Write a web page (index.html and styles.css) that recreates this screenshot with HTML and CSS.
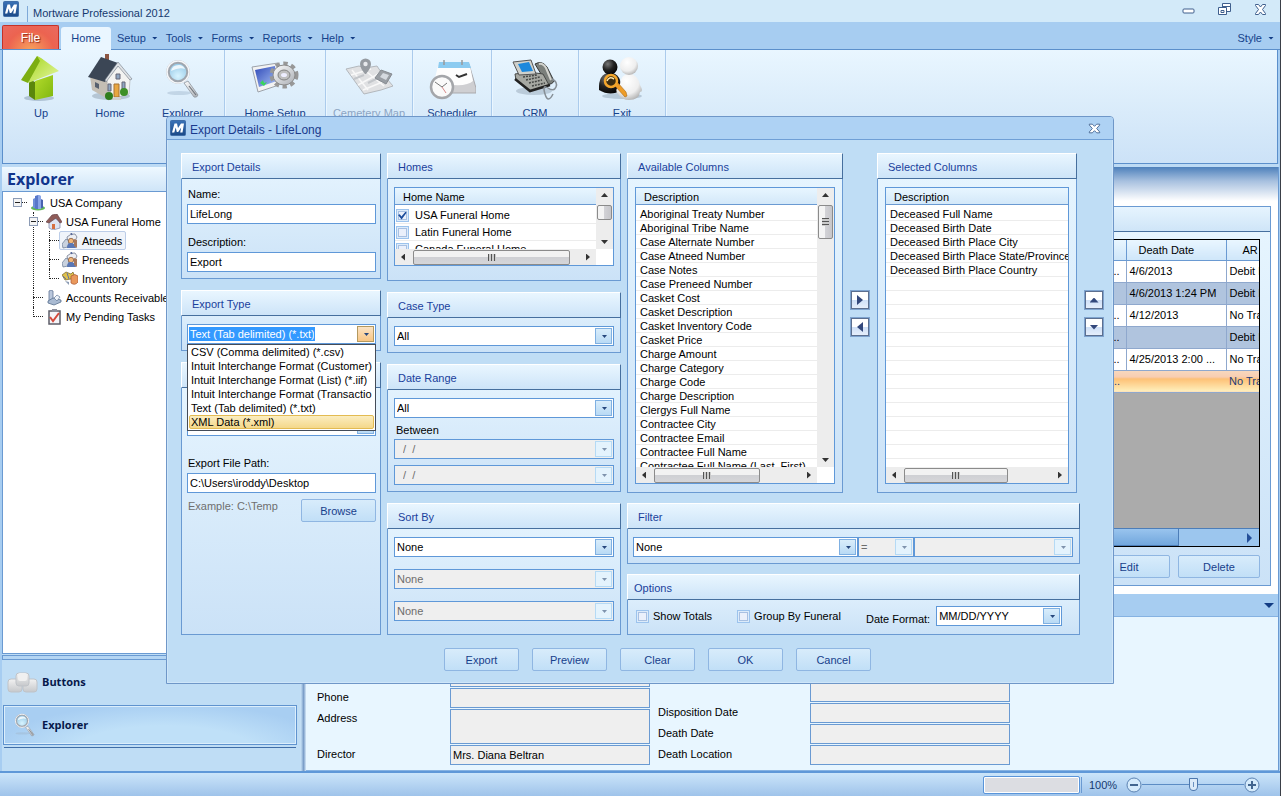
FILE: index.html
```html
<!DOCTYPE html>
<html lang="en">
<head>
<meta charset="utf-8">
<title>Mortware Professional 2012</title>
<link rel="stylesheet" href="styles.css">
</head>
<body>
<svg class="defs" aria-hidden="true">
  <defs>
    <linearGradient id="gBlue" x1="0" y1="0" x2="0" y2="1"><stop offset="0" stop-color="#3a72b6"/><stop offset="1" stop-color="#1b4a88"/></linearGradient>
    <linearGradient id="gGreen" x1="0" y1="0" x2="1" y2="1"><stop offset="0" stop-color="#b4dc2c"/><stop offset="1" stop-color="#7fb60f"/></linearGradient>
    <linearGradient id="gLime" x1="0" y1="0" x2="1" y2="1"><stop offset="0" stop-color="#a5d61f"/><stop offset="1" stop-color="#e6f7a4"/></linearGradient>
    <linearGradient id="gSilver" x1="0" y1="0" x2="1" y2="1"><stop offset="0" stop-color="#ffffff"/><stop offset="1" stop-color="#a9adb3"/></linearGradient>
    <linearGradient id="gCube" x1="0" y1="0" x2="0" y2="1"><stop offset="0" stop-color="#f2f2f2"/><stop offset="1" stop-color="#c6c8cb"/></linearGradient>
    <linearGradient id="gScreen" x1="0" y1="0" x2="1" y2="1"><stop offset="0" stop-color="#2f49b8"/><stop offset="1" stop-color="#a9c3f5"/></linearGradient>
    <radialGradient id="gBlack" cx=".35" cy=".3" r=".8"><stop offset="0" stop-color="#777"/><stop offset=".5" stop-color="#222"/><stop offset="1" stop-color="#000"/></radialGradient>
    <radialGradient id="gWhite" cx=".4" cy=".3" r=".8"><stop offset="0" stop-color="#fff"/><stop offset=".6" stop-color="#eeeeee"/><stop offset="1" stop-color="#a2a2a2"/></radialGradient>
    <radialGradient id="gLens" cx=".5" cy=".7" r=".7"><stop offset="0" stop-color="#d8f4ff"/><stop offset="1" stop-color="#8fc4e4"/></radialGradient>
  </defs>
  <symbol id="logo" viewBox="0 0 16 16">
    <rect x=".5" y=".5" width="15" height="15" rx="1" fill="url(#gBlue)" stroke="#3f6ea8"/>
    <path d="M2 12.500 4.500 3.500H7L8 8l3-4.500h3L12.500 12.500h-2.300L11.200 7.500 8.200 12H6.800L5.700 7.500 4.300 12.500z" fill="#fff"/>
  </symbol>
  <symbol id="lens" viewBox="0 0 36 40">
    <ellipse cx="14" cy="34" rx="12" ry="2" fill="#9fb6cc" opacity=".45"/>
    <path d="M19 24l4-2 10 14q-1 3-4 2z" fill="url(#gSilver)" stroke="#8e949c" stroke-width=".8"/>
    <path d="M24 27l7 9" stroke="#70757c" stroke-width="1.200"/>
    <circle cx="13" cy="13" r="10" fill="url(#gLens)" stroke="#a0a6ae" stroke-width="3.500"/>
    <circle cx="13" cy="13" r="11" fill="none" stroke="#f6f7f9" stroke-width="1.500"/>
    <path d="M6 12q1-6 8-6 4 0 6 4-6-2-14 2z" fill="#fff" opacity=".8"/>
  </symbol>
  <symbol id="people" viewBox="0 0 16 16">
    <path d="M5 4q4-4 8-3l2 3-2 4-7 1z" fill="#eceef3" stroke="#737c90" stroke-width=".8"/>
    <path d="M9 0l1 2" stroke="#53669a" stroke-width="1.500"/>
    <path d="M0 11l4-5 3 2-1 6-5 1z" fill="#c9d2df" stroke="#667892" stroke-width=".7"/>
    <circle cx="9" cy="8" r="2.700" fill="#f0b679" stroke="#7d533a" stroke-width=".7"/>
    <path d="M5 15q0-5 4-5t5 5z" fill="#5a77b5"/>
    <path d="M12 6l3 1v8l-3-2z" fill="#a8785c"/>
  </symbol>
</svg>

<div class="window">
  <header class="titlebar">
    <svg class="logo"><use href="#logo"/></svg>
    <span class="divider"></span>
    <h1>Mortware Professional 2012</h1>
    <div class="winctl">
      <button aria-label="Minimize"><svg width="15" height="15" viewBox="0 0 15 15"><rect x="2" y="7" width="11" height="4" rx="1" fill="#fff" stroke="#3f5f8d"/></svg></button>
      <button aria-label="Restore"><svg width="15" height="15" viewBox="0 0 15 15"><path d="M5.500 1.500h8v8h-8z M6 4.500h7" fill="#fff" stroke="#3f5f8d"/><path d="M1.500 5.500h8v7h-8z M4 8.500h3v2h-3z" fill="#fff" stroke="#3f5f8d"/></svg></button>
      <button aria-label="Close"><svg width="15" height="15" viewBox="0 0 15 15"><path d="M2.500 2.500h3L7.500 5l2-2.500h3v1L9.500 7.500l3 4v1h-3L7.500 10l-2 2.500h-3v-1l3-4-3-4z" fill="#fff" stroke="#3f5f8d"/></svg></button>
    </div>
  </header>

  <nav class="menu">
    <button class="file">File</button>
    <button class="tab">Home</button>
    <button class="item">Setup</button>
    <button class="item">Tools</button>
    <button class="item">Forms</button>
    <button class="item">Reports</button>
    <button class="item">Help</button>
    <button class="item style">Style</button>
  </nav>

  <section class="ribbon">
    <div class="rgroup first">
      <button class="up"><svg width="48" height="48" viewBox="0 0 48 48"><ellipse cx="22" cy="44" rx="15" ry="3" fill="#8297ad" opacity=".5"/><path d="M12 25l6 3v18l-6-4z" fill="#5b870c"/><path d="M18 27l18-6v21l-18 4z" fill="url(#gGreen)"/><path d="M20 2 4 26l7 3L26 6z" fill="#7cae12"/><path d="M20 2 24 4 42 17l-31 12L23 7z" fill="url(#gLime)"/></svg>Up</button>
      <button class="home"><svg width="48" height="48" viewBox="0 0 48 48"><ellipse cx="25" cy="42" rx="19" ry="4" fill="#8e9eae" opacity=".5"/><path d="M19 0h4v9h-4z" fill="#8b5542"/><path d="M4 22l2 14 16 9V24z" fill="#c4beb4"/><path d="M21 25 33 11l11 15-1 14-21 6z" fill="#f3f3f1" stroke="#aaa" stroke-width=".6"/><path d="M2 23 15 3l17 6-13 19z" fill="#3b4655"/><path d="M32 8l14 17-2 1-12-14-12 16-1-2z" fill="#dfe2e5" stroke="#717b86" stroke-width=".6"/><path d="M28 30h5v13h-5z" fill="#e8a640" stroke="#a77331"/><path d="M22 30h3v7h-3zM36 28h3v7h-3zM30 20h4v5h-4z" fill="#8fa6c1" stroke="#667"/><circle cx="23" cy="42" r="4" fill="#2f7d1d"/><circle cx="38" cy="38" r="4" fill="#3e9027"/><path d="M28 43h7v3h-9z" fill="#d0d0d0"/><path d="M9 28l4 2v5l-4-2z" fill="#56606e"/></svg>Home</button>
      <button class="expl"><svg width="48" height="48" viewBox="-6 -5 48 48"><use href="#lens" width="36" height="40"/></svg>Explorer</button>
    </div>
    <div class="rgroup wide">
      <button><svg width="48" height="48" viewBox="0 0 48 48"><path d="M1 13l26-4 1 22-21 7z" fill="#f3f3f3" stroke="#9ca2aa"/><path d="M4 16l20-4 2 15-18 6z" fill="url(#gScreen)"/><path d="M9 29l3-3 1 3 3-1-3 4z" fill="#38d55b"/><g transform="translate(33 21)"><ellipse rx="12" ry="11" fill="none" stroke="#989898" stroke-width="5" stroke-dasharray="4.200 3.400"/><ellipse rx="11" ry="10" fill="url(#gSilver)" stroke="#8b8b8b"/><ellipse rx="6" ry="5" fill="#bfbfbf" stroke="#828282"/><ellipse rx="3" ry="2" fill="#eef"/></g></svg>Home Setup</button>
    </div>
    <div class="rgroup">
      <button disabled><svg width="48" height="48" viewBox="0 0 48 48"><path d="M1 15l13-3 6 2 12-2 4 6 12 14-12 4-17 4z" fill="#e0e1e3" stroke="#b3b8bd"/><path d="M7 16l16 20M17 14l22 18M6 21l20-6M13 31l22-12M18 36l22-9" stroke="#f8f8f8" stroke-width="1.500" fill="none"/><path d="M9 25l10-4M23 29l10-5" stroke="#c3c6ca" stroke-width="2"/><path d="M20 20q-5-6-5-10a5 5 0 0 1 11 0q0 4-5 10z" fill="#969ba1"/><circle cx="20.500" cy="10" r="2.200" fill="#e7e9ec"/><path d="M30 24l6-8 11 4-6 10z" fill="#999ea4" stroke="#868b91"/><path d="M35 23l3-4 6 2-3 5z" fill="#d4d9df"/></svg>Cemetery Map</button>
    </div>
    <div class="rgroup narrow">
      <button><svg width="48" height="48" viewBox="0 0 48 48"><path d="M6 36l6-26h29l7 24v5H8z" fill="#cfcfd2" stroke="#a9a9ad"/><path d="M10 12h32l3 15q-5 5-20 4L6 28z" fill="#fdfdfd"/><path d="M11 8h30l2 6H10z" fill="#8ccbf0"/><path d="M16 11V6M34 11V6" stroke="#999" stroke-width="1.500"/><path d="M28 21l3 2 8-3" fill="none" stroke="#333" stroke-width="2"/><circle cx="14" cy="33" r="11" fill="#fafafa" stroke="#a4a6aa" stroke-width="2.500"/><path d="M7 28l7 5 5-4" fill="none" stroke="#777"/><path d="M14 33l4 6" stroke="#d78989"/></svg>Scheduler</button>
    </div>
    <div class="rgroup">
      <button><svg width="48" height="48" viewBox="0 0 48 48"><ellipse cx="23" cy="37" rx="18" ry="4" fill="#8496a8" opacity=".4"/><path d="M24 10q7-4 12 3l7 14q-2 4-7 3L27 15z" fill="#7b7f7b" stroke="#363838"/><path d="M28 10q4-1 7 4l5 12" fill="none" stroke="#d2d3ce" stroke-width="2"/><path d="M4 20l14-2 14 2 6 11-19 6L5 26z" fill="#a6a8a2" stroke="#464846"/><path d="M4 25l15 12 20-6" fill="none" stroke="#222" stroke-width="2.500"/><path d="M2 8l18-2 5 14-17 1z" fill="#d0d1cc" stroke="#555"/><path d="M7 10l11-2 4 9-11 1z" fill="#1d88dc"/><path d="M12 23l14-2M15 26l14-3M18 29l13-3M21 32l13-3" stroke="#454745" stroke-width="1.500" stroke-dasharray="2 1"/><path d="M41 25q6 3 4 8t-8 1-3 6 8 0" fill="none" stroke="#878f96" stroke-width="1.500"/></svg>CRM</button>
    </div>
    <div class="rgroup">
      <button><svg width="48" height="48" viewBox="0 0 48 48"><ellipse cx="24" cy="42" rx="20" ry="3" fill="#8fa3b6" opacity=".5"/><path d="M1 36q-1-16 11-18 12 2 11 18-10 7-22 0z" fill="url(#gBlack)"/><circle cx="12" cy="13" r="7.500" fill="url(#gBlack)"/><path d="M20 40q-4-4 2-10 1-9 9-11 9 2 11 12 4 7 0 7-1 8-11 8-7 0-11-6z" fill="url(#gWhite)"/><circle cx="31" cy="12" r="9" fill="url(#gWhite)"/><path d="M17 32l10 11 2-1-1-4-8-9z" fill="#ee9c27" stroke="#a96812" stroke-width=".6"/><circle cx="13" cy="27" r="6" fill="#3a2c12" stroke="#f3a62c" stroke-width="2.500"/><path d="M9 27q2-5 7-2" stroke="#ffe7a8" stroke-width="1.500" fill="none"/></svg>Exit</button>
    </div>
  </section>

  <main class="workspace">
    <aside class="sidebar">
      <h2>Explorer</h2>
      <div class="tree">
        <div class="node root"><span class="expander"></span><svg width="16" height="16" viewBox="0 0 16 16"><ellipse cx="8" cy="13" rx="7" ry="2.500" fill="#62b85b"/><path d="M3 4l2-1v10H3z" fill="#6d8ed9"/><path d="M5 1l3-1 3 1v13H5z" fill="#5877c9"/><path d="M8 0l3 1v13H8z" fill="#8ba6e8"/><path d="M11 4l2 1v8h-2z" fill="#4863b0"/></svg><span>USA Company</span></div>
        <ul>
          <li>
            <div class="node"><span class="expander"></span><svg width="16" height="16" viewBox="0 0 16 16"><path d="M3 8l5-4 6 3v7l-7 2-4-2z" fill="#dfe4f3" stroke="#7884ab" stroke-width=".7"/><path d="M0 8l6-7 5-1 5 8-2 1-4-5-7 5z" fill="#8f5c58" stroke="#68464c" stroke-width=".7"/><path d="M6 10h3v5H6z" fill="#d66f42"/></svg><span>USA Funeral Home</span></div>
            <ul>
              <li><div class="node"><span class="pick"><svg width="16" height="16"><use href="#people"/></svg><span>Atneeds</span></span></div></li>
              <li><div class="node"><svg width="16" height="16"><use href="#people"/></svg><span>Preneeds</span></div></li>
              <li><div class="node"><svg width="16" height="16" viewBox="0 0 16 16"><path d="M0 4l4-3 5 2 2-2 1 3-3 4-6 1z" fill="#dfc14b" stroke="#766326" stroke-width=".7"/><path d="M1 5l3 3M5 2l2 6" stroke="#6472a0"/><path d="M9 5q4-3 7 0v6q-3 4-7 1z" fill="#e9985c" stroke="#a65431" stroke-width=".7"/><path d="M3 10l4 1v3z" fill="#8c9cb4"/></svg><span>Inventory</span></div></li>
            </ul>
          </li>
          <li><div class="node"><svg width="16" height="16" viewBox="0 0 16 16"><path d="M3 1l2-1 2 1v9l-3 2H3z" fill="#b9c7dc" stroke="#5f7596" stroke-width=".8"/><path d="M2 11l5-3 8 2v2l-7 3-6-2z" fill="#a9bad2" stroke="#58708e" stroke-width=".8"/><path d="M8 8l3-3 3 2-3 4z" fill="#eef3f9" stroke="#61799a" stroke-width=".7"/></svg><span>Accounts Receivable</span></div></li>
          <li><div class="node"><svg width="16" height="16" viewBox="0 0 16 16"><path d="M3 2h11v13H3z" fill="#f4f4f8" stroke="#5d5d68" stroke-width="1.500"/><path d="M6 0h5v3H6z" fill="#8c8e9b"/><path d="M4 8l3 4 6-8" fill="none" stroke="#d4493b" stroke-width="2"/></svg><span>My Pending Tasks</span></div></li>
        </ul>
      </div>
      <div class="grip"></div>
      <button class="navbtn"><svg width="32" height="24" viewBox="0 0 32 24"><g fill="url(#gCube)" stroke="#bfc3c8"><rect x="1" y="9" width="14" height="13" rx="3"/><rect x="16" y="9" width="14" height="13" rx="3"/><rect x="9" y="3" width="13" height="13" rx="3"/></g><rect x="11" y="3" width="9" height="8" rx="2" fill="#f0f0f0"/></svg>Buttons</button>
      <button class="navbtn active"><svg width="32" height="24" viewBox="-9 0 40 30"><use href="#lens" width="27" height="30"/></svg>Explorer</button>
    </aside>
    <div class="splitter"></div>

    <section class="content">
      <div class="band">
        <div class="card">
          <div class="cardhead"></div>
          <div class="cardbody">
            <div class="grid">
              <table>
                <colgroup><col><col class="cdate"><col class="car"></colgroup>
                <thead><tr><th></th><th>Death Date</th><th>AR</th></tr></thead>
                <tbody>
                  <tr><td>..</td><td>4/6/2013</td><td>Debit B</td></tr>
                  <tr class="alt"><td></td><td>4/6/2013 1:24 PM</td><td>Debit B</td></tr>
                  <tr><td>...</td><td>4/12/2013</td><td>No Tra</td></tr>
                  <tr class="alt"><td>...</td><td></td><td>Debit B</td></tr>
                  <tr><td>...</td><td>4/25/2013 2:00 ...</td><td>No Tra</td></tr>
                  <tr class="hot"><td>..</td><td></td><td>No Tra</td></tr>
                </tbody>
              </table>
              <div class="gridbar"><span class="gthumb"></span><svg width="7" height="10" viewBox="0 0 7 10"><path d="M1 0l5 5-5 5z" fill="#244f99"/></svg></div>
            </div>
            <div class="actions"><button class="btn">Edit</button><button class="btn">Delete</button></div>
          </div>
        </div>
      </div>
      <div class="bar"><svg width="10" height="5" viewBox="0 0 10 5"><path d="M0 0h10L5 5z" fill="#123c84"/></svg></div>
      <div class="form">
        <div class="fields">
          <span></span><input aria-label="Contact" readonly>
          <label for="phone">Phone</label><input id="phone" readonly>
          <label for="addr">Address</label><textarea id="addr" readonly></textarea>
          <label for="dir">Director</label><input id="dir" readonly value="Mrs. Diana Beltran">
        </div>
        <div class="fields right">
          <span></span><input aria-label="Service" readonly>
          <label for="disp">Disposition Date</label><input id="disp" readonly>
          <label for="dd">Death Date</label><input id="dd" readonly>
          <label for="dl">Death Location</label><input id="dl" readonly>
        </div>
      </div>
    </section>
  </main>

  <footer class="status">
    <span class="progress"></span>
    <div class="zoom">
      <label for="zoom">100%</label>
      <button aria-label="Zoom out"><svg width="16" height="16" viewBox="0 0 16 16"><circle cx="8" cy="8" r="7" fill="#d4eafb" stroke="#5c83b3"/><path d="M4 8h8" stroke="#41658f" stroke-width="2"/></svg></button>
      <input id="zoom" type="range" min="0" max="100" value="50">
      <button aria-label="Zoom in"><svg width="16" height="16" viewBox="0 0 16 16"><circle cx="8" cy="8" r="7" fill="#d4eafb" stroke="#5c83b3"/><path d="M4 8h8M8 4v8" stroke="#41658f" stroke-width="2"/></svg></button>
    </div>
  </footer>

  <div class="dialog" role="dialog" aria-labelledby="dlgtitle">
    <div class="dlghead">
      <svg class="logo"><use href="#logo"/></svg>
      <h2 id="dlgtitle">Export Details - LifeLong</h2>
      <button aria-label="Close dialog"><svg width="13" height="13" viewBox="0 0 15 15"><path d="M1.500 2.500h3.500L7.500 5l2.500-2.500h3.500v1L10 7.500l3.500 4v1H10L7.500 10 5 12.500H1.500v-1l3.500-4-3.500-4z" fill="#fff" stroke="#3f5f8d"/></svg></button>
    </div>
    <div class="dlgbody">
      <div class="cols">
        <div class="col a">
          <section class="group details">
            <h3>Export Details</h3>
            <div class="gbody">
              <label for="name">Name:</label><input id="name" class="text" value="LifeLong">
              <label for="desc" class="second">Description:</label><input id="desc" class="text" value="Export">
            </div>
          </section>
          <section class="group">
            <h3>Export Type</h3>
            <div class="gbody">
              <div class="combo open">
                <input class="marked" aria-label="Export type" value="Text (Tab delimited) (*.txt)">
                <ul class="options" role="listbox">
                  <li>CSV (Comma delimited) (*.csv)</li>
                  <li>Intuit Interchange Format (Customer)</li>
                  <li>Intuit Interchange Format (List) (*.iif)</li>
                  <li>Intuit Interchange Format (Transactio</li>
                  <li>Text (Tab delimited) (*.txt)</li>
                  <li class="hover">XML Data (*.xml)</li>
                </ul>
              </div>
            </div>
          </section>
          <section class="group grow">
            <h3></h3>
            <div class="gbody path">
              <div class="combo"><select aria-label="Export options"><option></option></select></div>
              <label for="path">Export File Path:</label><input id="path" class="text" value="C:\Users\iroddy\Desktop">
              <div class="browse"><span>Example: C:\Temp</span><button class="btn">Browse</button></div>
            </div>
          </section>
        </div>

        <div class="col b">
          <section class="group homes">
            <h3>Homes</h3>
            <div class="gbody">
              <div class="listbox">
                <div class="view">
                  <table>
                    <thead><tr><th>Home Name</th></tr></thead>
                    <tbody>
                      <tr><td><label><input type="checkbox" checked>USA Funeral Home</label></td></tr>
                      <tr><td><label><input type="checkbox">Latin Funeral Home</label></td></tr>
                      <tr><td><label><input type="checkbox">Canada Funeral Home</label></td></tr>
                    </tbody>
                  </table>
                </div>
                <div class="vbar"><i class="arr u"></i><span class="thumb"></span><i class="arr d"></i></div>
                <div class="hbar"><i class="arr l"></i><span class="thumb"></span><i class="arr r"></i></div>
              </div>
            </div>
          </section>
          <section class="group">
            <h3>Case Type</h3>
            <div class="gbody"><div class="combo"><select aria-label="Case type"><option>All</option></select></div></div>
          </section>
          <section class="group">
            <h3>Date Range</h3>
            <div class="gbody">
              <div class="combo"><select aria-label="Date range"><option>All</option></select></div>
              <span class="between">Between</span>
              <div class="stack">
                <div class="combo off date"><input aria-label="From" value="/  /" disabled></div>
                <div class="combo off date"><input aria-label="To" value="/  /" disabled></div>
              </div>
            </div>
          </section>
          <section class="group grow">
            <h3>Sort By</h3>
            <div class="gbody sort">
              <div class="combo"><select aria-label="Sort first"><option>None</option></select></div>
              <div class="combo off"><select aria-label="Sort second" disabled><option>None</option></select></div>
              <div class="combo off"><select aria-label="Sort third" disabled><option>None</option></select></div>
            </div>
          </section>
        </div>

        <div class="col c">
          <div class="pair">
            <section class="group avail">
              <h3>Available Columns</h3>
              <div class="gbody">
                <div class="listbox rows">
                  <div class="view">
                    <table>
                      <thead><tr><th>Description</th></tr></thead>
                      <tbody>
                        <tr><td>Aboriginal Treaty Number</td></tr><tr><td>Aboriginal Tribe Name</td></tr>
                        <tr><td>Case Alternate Number</td></tr><tr><td>Case Atneed Number</td></tr>
                        <tr><td>Case Notes</td></tr><tr><td>Case Preneed Number</td></tr>
                        <tr><td>Casket Cost</td></tr><tr><td>Casket Description</td></tr>
                        <tr><td>Casket Inventory Code</td></tr><tr><td>Casket Price</td></tr>
                        <tr><td>Charge Amount</td></tr><tr><td>Charge Category</td></tr>
                        <tr><td>Charge Code</td></tr><tr><td>Charge Description</td></tr>
                        <tr><td>Clergys Full Name</td></tr><tr><td>Contractee City</td></tr>
                        <tr><td>Contractee Email</td></tr><tr><td>Contractee Full Name</td></tr>
                        <tr><td>Contractee Full Name (Last, First)</td></tr>
                      </tbody>
                    </table>
                  </div>
                  <div class="vbar"><i class="arr u"></i><span class="thumb ribbed"></span><i class="arr d"></i></div>
                  <div class="hbar"><i class="arr l"></i><span class="thumb"></span><i class="arr r"></i></div>
                </div>
              </div>
            </section>
            <div class="movers">
              <button aria-label="Add column"><i class="arr r"></i></button>
              <button aria-label="Remove column"><i class="arr l"></i></button>
            </div>
            <section class="group chosen">
              <h3>Selected Columns</h3>
              <div class="gbody">
                <div class="listbox rows plain">
                  <div class="view">
                    <table>
                      <thead><tr><th>Description</th></tr></thead>
                      <tbody>
                        <tr><td>Deceased Full Name</td></tr><tr><td>Deceased Birth Date</td></tr>
                        <tr><td>Deceased Birth Place City</td></tr><tr><td>Deceased Birth Place State/Province</td></tr>
                        <tr><td>Deceased Birth Place Country</td></tr>
                        <tr><td></td></tr><tr><td></td></tr><tr><td></td></tr><tr><td></td></tr><tr><td></td></tr>
                        <tr><td></td></tr><tr><td></td></tr><tr><td></td></tr><tr><td></td></tr><tr><td></td></tr>
                        <tr><td></td></tr><tr><td></td></tr><tr><td></td></tr><tr><td></td></tr>
                      </tbody>
                    </table>
                  </div>
                  <div class="hbar"><i class="arr l"></i><span class="thumb"></span><i class="arr r"></i></div>
                </div>
              </div>
            </section>
            <div class="movers">
              <button aria-label="Move up"><i class="arr u"></i></button>
              <button aria-label="Move down"><i class="arr d"></i></button>
            </div>
          </div>
          <section class="group wide">
            <h3>Filter</h3>
            <div class="gbody filter">
              <div class="combo f1"><select aria-label="Filter field"><option>None</option></select></div>
              <div class="combo off f2"><select aria-label="Operator" disabled><option>=</option></select></div>
              <div class="combo off f3"><select aria-label="Filter value" disabled><option></option></select></div>
            </div>
          </section>
          <section class="group wide opts">
            <h3>Options</h3>
            <div class="gbody">
              <label><input type="checkbox">Show Totals</label>
              <label><input type="checkbox">Group By Funeral</label>
              <label for="fmt" class="fmt">Date Format:</label>
              <div class="combo"><select id="fmt"><option>MM/DD/YYYY</option></select></div>
            </div>
          </section>
        </div>
      </div>
      <div class="buttons">
        <button class="btn">Export</button><button class="btn">Preview</button><button class="btn">Clear</button><button class="btn">OK</button><button class="btn">Cancel</button>
      </div>
    </div>
  </div>
</div>
</body>
</html>
```
FILE: styles.css
```css
* { box-sizing: border-box; }
body { margin: 0; background: #a7cdf1; color: #000; }
body, button, input, select, textarea { font: 11px/14px "Liberation Sans", Arial, sans-serif; }
button { border: 0; background: none; padding: 0; color: #15428b; }
h1, h2, h3, ul { margin: 0; padding: 0; font-weight: normal; list-style: none; }
h1 { font-size: 11px; }
svg { display: block; flex: none; }
.defs { position: absolute; width: 0; height: 0; }
.logo { width: 16px; height: 16px; }

/* Main window */
.window { position: relative; display: flex; flex-direction: column; height: 100vh; border-right: 1px solid #3a3f47; overflow: hidden; }
.titlebar { display: flex; align-items: center; height: 22px; padding: 0 12px 0 3px; background: #d3eaf9; color: #15396f; }
.titlebar .logo { margin-bottom: 4px; }
.titlebar .divider { width: 1px; height: 16px; margin: 5px 5px 0 8px; background: #7ea9d8; }
.titlebar h1 { padding-top: 3px; }
.winctl { display: flex; gap: 21px; margin-left: auto; padding-bottom: 3px; }
.menu { display: flex; align-items: flex-end; height: 28px; padding: 0 2px; background: #a7cdf1; border-bottom: 1px solid #5b8fcb; }
.menu button { height: 22px; }
.menu .file { width: 57px; height: 24px; margin-right: 2px; font-size: 12px; color: #fff; border: 1px solid #c43228; border-bottom: 0; border-radius: 2px 2px 0 0; background: radial-gradient(ellipse at 50% 110%, #f7a35d 0, #ec6350 60%, #ea6a60 100%); text-shadow: 1px 1px 1px #8d2a1c; }
.menu .tab { width: 50px; height: 23px; margin-bottom: -1px; padding-bottom: 2px; border-radius: 3px 3px 0 0; background: #eaf6ff; }
.menu .item { display: flex; align-items: center; gap: 6px; margin-left: 8px; }
.menu .tab + .item { margin-left: 6px; }
.menu .item::after { content: ""; width: 6px; height: 3px; background: #123c84; clip-path: polygon(0 0, 100% 0, 50% 100%); }
.menu .style { margin-left: auto; margin-right: 4px; }
.ribbon { display: flex; flex: none; height: 114px; margin: 0 2px; border: 1px solid #5b8fcb; border-top: 0; background: linear-gradient(#e9f6ff, #d9ebfa 55%, #cce2f7); }
.rgroup { display: flex; width: 87px; border-right: 1px solid #abcbec; box-shadow: 1px 0 #eaf6ff; }
.rgroup.first { width: 222px; }
.rgroup.wide { width: 101px; }
.rgroup.narrow { width: 79px; }
.rgroup button { display: flex; flex-direction: column; align-items: center; gap: 4px; width: 100%; padding-top: 4px; white-space: nowrap; line-height: 14px; }
.rgroup .up { width: 76px; flex: none; }
.rgroup .home { width: 62px; flex: none; }
.rgroup button:disabled { color: #8ca5c4; }
.workspace { display: flex; flex: 1; min-height: 0; margin: 0 1px 0 2px; padding-top: 3px; background: #bcdaf4; }

/* Sidebar */
.sidebar { display: flex; flex-direction: column; width: 298px; background: #bfddf5; padding-bottom: 26px; }
.sidebar h2 { height: 25px; padding: 2px 5px; font: bold 16px/20px "Open Sans", sans-serif; color: #10348c; background: linear-gradient(#eef8ff, #cfe5f8); border-bottom: 1px solid #6a9ad2; }
.tree { flex: 1; margin-bottom: 1px; padding: 1px 0 0; background: #fff; border: 1px solid #6a9ad2; border-top: 0; }
.node { position: relative; display: flex; align-items: center; gap: 4px; height: 19px; padding-left: 13px; white-space: nowrap; }
.node.root { padding-left: 27px; }
.tree ul { margin-left: 30px; }
.tree ul ul { margin-left: 16px; }
.tree li { position: relative; }
.tree li::before { content: ""; position: absolute; left: 0; top: 9px; width: 10px; border-top: 1px dotted #222; }
.tree li::after { content: ""; position: absolute; left: 0; top: 0; bottom: 0; border-left: 1px dotted #222; }
.tree li:last-child::after { bottom: auto; height: 10px; }
.expander { position: absolute; left: -4px; top: 5px; z-index: 1; width: 9px; height: 9px; border: 1px solid #8c9bb5; background: linear-gradient(#222, #222) center / 5px 1px no-repeat, #f4f4f4; }
.root .expander { left: 10px; }
.root::before { content: ""; position: absolute; left: 19px; top: 9px; width: 5px; border-top: 1px dotted #222; }
.pick { display: flex; align-items: center; gap: 4px; height: 19px; margin-left: -3px; padding: 0 3px 0 2px; border: 1px solid #bccde8; border-radius: 2px; background: #f0f4fa; }
.grip { height: 5px; border: 1px solid #6a9ad2; background: #b4d5f3; }
.navbtn { display: flex; align-items: center; gap: 3px; height: 40px; margin: 2px 3px 3px 1px; padding-left: 3px; color: #06184a; font: bold 11px/16px "Open Sans", sans-serif; border: 1px solid transparent; }
.navbtn:not(.active) { margin-bottom: 1px; }
.navbtn.active { margin-bottom: 0; border-color: #5f93cf; box-shadow: inset 0 0 0 1px #dbeefc, 0 3px 0 -1px #bfddf5, 0 4px 0 -1px #406ea8; background: radial-gradient(ellipse at 55% 120%, #bfe0f8 0 40%, #a8cef2 75%); }
.splitter { width: 6px; background: linear-gradient(90deg, #c3def4 15%, #7a9cc7 60%, #d4e7f7); }

/* Content pane */
.content { display: flex; flex-direction: column; flex: 1; min-width: 0; border-right: 1px solid #6a9ad2; }
.band { flex: 1; display: flex; padding: 39px 7px 8px 8px; background: linear-gradient(#4d80bb 0, #a7c0df 14px, #fff 34px); }
.card { display: flex; flex-direction: column; flex: 1; min-width: 0; border: 1px solid #6a9ad2; background: linear-gradient(#e8f6ff, #cbe2f7); }
.cardhead { height: 25px; border-bottom: 1px solid #466f9e; background: linear-gradient(#e6f4fe, #cfe5f8); }
.cardbody { display: flex; flex-direction: column; flex: 1; gap: 8px; padding: 7px 10px; }
.grid { display: flex; flex-direction: column; flex: 1; overflow: hidden; border: 1px solid #000; background: #ababab; }
.grid table { width: 100%; table-layout: fixed; border-collapse: collapse; }
.cdate { width: 100px; }
.car { width: 33px; }
.grid th, .grid td { height: 22px; padding: 0 0 0 3px; overflow: hidden; white-space: nowrap; border-right: 1px solid #8fa8cd; border-bottom: 1px solid #8fa8cd; text-align: left; font-weight: normal; background: #fff; }
.grid th { height: 20px; padding-left: 12px; background: linear-gradient(#e9f6ff, #cfe6f9); border-color: #6a9ad2; }
.grid th:last-child { padding-left: 16px; }
.grid td:first-child { text-align: right; padding-right: 6px; }
.grid tr > :last-child { border-right: 0; }
.grid .alt td { background: #b0c4de; }
.grid .hot td { border-right: 0; color: #1c3c78; background: linear-gradient(#f8d8bd, #f8ccb0 7px, #fdbf73 8px, #fff0bd); }
.gridbar { display: flex; align-items: center; justify-content: space-between; height: 18px; margin-top: auto; padding-right: 6px; background: #9cc6ee; border-top: 1px solid #4c7db8; }
.gthumb { width: 92%; height: 100%; border: 1px solid #4c7db8; border-top: 0; background: linear-gradient(#99c4ee, #72a7dd); }
.actions { display: flex; justify-content: flex-end; gap: 8px; }
.btn { width: 75px; height: 23px; border: 1px solid #8fb6e2; border-radius: 2px; background: linear-gradient(#d8ecfb, #c1dff7); color: #17408b; }
.actions .btn { width: 82px; }
.bar { display: flex; align-items: center; justify-content: flex-end; height: 23px; padding-right: 4px; background: #a7cdf1; border-bottom: 1px solid #85b2e2; }
.form { display: flex; align-items: flex-end; gap: 8px; height: 154px; padding: 0 10px 5px 11px; background: #e8f6ff; border-bottom: 1px solid #85b2e2; }
.fields { display: grid; grid-template-columns: 133px 200px; gap: 1px 0; }
.fields.right { grid-template-columns: 152px 200px; }
.fields label { align-self: start; padding-top: 2px; }
.fields input, .fields textarea { width: 100%; height: 20px; padding: 0 2px; border: 1px solid #6a9ad2; border-radius: 0; background: #efefef; resize: none; outline: 0; }
.fields textarea { display: block; height: 35px; }

/* Status bar */
.status { display: flex; justify-content: flex-end; align-items: center; height: 25px; padding-right: 20px; border-top: 2px solid #5f98d8; background: linear-gradient(#cbe5fa, #9fc3ea); }
.progress { width: 97px; height: 18px; border: 1px solid #5a95da; border-radius: 2px; box-shadow: inset 0 0 0 1px #fff; background: #dcdde2; }
.zoom { display: flex; align-items: center; margin-left: 1px; padding-left: 7px; border-left: 1px solid #6a9ad2; color: #15396f; }
.zoom label { width: 37px; }
.zoom input { width: 102px; height: 16px; margin: 0; appearance: none; background: linear-gradient(#5c8cc4, #5c8cc4) center / 100% 1px no-repeat; }
.zoom input::-webkit-slider-thumb { appearance: none; width: 9px; height: 13px; border: 1px solid #4d78ae; border-radius: 1px 1px 5px 5px; background: linear-gradient(#6b91c0, #6b91c0) center / 1px 5px no-repeat, #dbeaf8; }

/* Dialog */
.dialog { position: absolute; left: 166px; top: 116px; width: 948px; border: 1px solid #6f97c8; border-radius: 4px 4px 0 0; background: #bfddf5; box-shadow: inset 0 0 0 1px #cfe6f9; }
.dlghead { display: flex; align-items: center; gap: 4px; height: 23px; padding: 0 12px 0 3px; border-bottom: 1px solid #6f9fd6; border-radius: 3px 3px 0 0; background: #aed2f4; }
.dlghead h2 { font-size: 12px; color: #1a3a8c; padding-top: 3px; }
.dlghead button { margin-left: auto; }
.dlgbody { padding: 13px 9px 12px 14px; }
.cols { display: flex; gap: 6px; }
.col { display: flex; flex-direction: column; flex: none; gap: 11px; }
.col.a { width: 200px; }
.col.b { width: 234px; }
.col.c { flex: 1; gap: 10px; }
.group { display: flex; flex-direction: column; border: 1px solid #6a9ad2; border-top: 0; background: linear-gradient(#e8f6ff, #cbe2f7); }
.group h3 { flex: none; height: 26px; margin: 0 -1px; padding: 6px 10px; font-size: 11px; line-height: 14px; color: #1a3f9c; background: linear-gradient(#e9f6ff, #cde4f8); border: 1px solid; border-color: #fff #466f9e #466f9e #fff; }
.gbody { flex: 1; padding: 8px 6px 6px; }
.grow { flex: 1; }
.text { display: block; width: 100%; height: 20px; padding: 0 2px; border: 1px solid #5f98d8; border-radius: 0; background: #fff; outline: 0; }
.details .gbody { padding-top: 6px; }
.details label { display: block; height: 19px; padding: 2px 1px; }
.details .second { height: 28px; padding-top: 11px; }
.col.a .gbody { padding-right: 4px; padding-left: 5px; }

.combo { position: relative; height: 20px; border: 1px solid #5f98d8; background: #fff; }
.combo select, .combo input { display: block; width: 100%; height: 18px; padding: 0 2px; border: 0; border-radius: 0; appearance: none; background: none; color: #000; opacity: 1; outline: 0; }
.combo::before, .combo::after { content: ""; position: absolute; pointer-events: none; }
.combo::before { right: 1px; top: 1px; bottom: 1px; width: 15px; border: 1px solid #7fb0e2; background: linear-gradient(#d9edfb, #b9daf5); }
.combo::after { right: 6px; top: 8px; width: 5px; height: 3px; background: #26477d; clip-path: polygon(0 0, 100% 0, 50% 100%); }
.combo.off { background: #efefef; }
.combo.off select, .combo.off input { color: #6d6d6d; }
.combo.off::before { border-color: #b5daf5; background: #e4f3fd; }
.combo.off::after { background: #7f93ad; }
.combo.date input { padding-left: 8px; white-space: pre; }
.combo .marked { width: 126px; height: 14px; margin: 2px 0 0 1px; padding: 0 1px; background: #3399ff; color: #fff; }
.combo.open::before { border-color: #b3995f; background: linear-gradient(#fbe3c4, #f9c684); }
.options { position: absolute; z-index: 2; left: -1px; right: -1px; top: 19px; height: 87px; overflow: hidden; border: 1px solid #444c58; background: #fff; white-space: nowrap; }
.options li { height: 14px; padding-left: 3px; line-height: 14px; overflow: hidden; margin-right: 3px; }
.options .hover { margin: 0 1px; padding-left: 1px; line-height: 12px; border: 1px solid #e3bb52; border-radius: 2px; background: linear-gradient(#fbedc0, #f4d88a); }
.group .path { padding-top: 28px; }
.path label { display: block; height: 37px; padding: 20px 1px 0; }
.browse { display: flex; justify-content: space-between; padding-top: 6px; color: #6f6f6f; white-space: nowrap; }
.browse span { padding-left: 1px; }
.browse .btn { flex: none; }

.listbox { display: grid; grid-template: minmax(0, 1fr) 16px / minmax(0, 1fr) 17px; height: 79px; border: 1px solid #5f98d8; background: #fff; }
.listbox.plain { grid-template-columns: minmax(0, 1fr); }
.listbox.rows { height: 297px; }
.view { overflow: hidden; }
.view table { width: 100%; border-spacing: 0; table-layout: fixed; }
.view th { height: 17px; padding: 1px 8px 0; line-height: 14px; text-align: left; font-weight: normal; background: linear-gradient(#e8f6ff, #d3e8f9); border-bottom: 1px solid #6a9ad2; }
.view thead::after { content: ""; display: block; height: 2px; }
.view td { height: 17px; padding: 0; border-bottom: 1px solid #ececec; white-space: nowrap; overflow: hidden; }
.rows td { height: 14px; padding: 1px 0 0 4px; line-height: 12px; }
.view label { display: flex; align-items: center; gap: 6px; padding-left: 1px; }
input[type="checkbox"] { appearance: none; flex: none; width: 13px; height: 13px; margin: 0; border: 1px solid #9cc3ed; background: #eaf0fb; box-shadow: inset 0 0 0 1px #dcebfa, inset 0 0 0 2px #a8c0e2; }
input[type="checkbox"]:checked::before { content: ""; display: block; width: 9px; height: 8px; margin: 2px 1px; background: #1b4c9c; clip-path: polygon(0 45%, 20% 35%, 38% 62%, 85% 0, 95% 15%, 40% 100%); }
.homes .gbody { padding-bottom: 14px; }
.avail .gbody, .chosen .gbody { padding: 8px 7px; }
.vbar, .hbar { display: flex; align-items: center; background: #ededed; }
.vbar { flex-direction: column; padding: 5px 0; }
.hbar { padding: 0 6px; grid-row: 2; }
.arr { flex: none; width: 7px; height: 4px; background: #333; }
.arr.u { clip-path: polygon(50% 0, 100% 100%, 0 100%); }
.arr.d { clip-path: polygon(0 0, 100% 0, 50% 100%); margin-top: auto; }
.arr.l { width: 4px; height: 7px; clip-path: polygon(0 50%, 100% 0, 100% 100%); }
.arr.r { width: 4px; height: 7px; clip-path: polygon(0 0, 100% 50%, 0 100%); margin-left: auto; }
.thumb { border: 1px solid #8b8b8b; border-radius: 2px; }
.hbar .thumb { width: 157px; height: 15px; margin-left: 8px; background: repeating-linear-gradient(90deg, #555 0 1px, #ccc 1px 3px) center / 8px 7px no-repeat, linear-gradient(#f2f2f2 45%, #cfd0d4 50%, #d6d6d9); }
.vbar .thumb { width: 15px; height: 15px; margin-top: 8px; background: linear-gradient(90deg, #f4f4f4 45%, #d2d2d6 50%, #c6c6ca); }
.vbar .ribbed { height: 34px; background: repeating-linear-gradient(#555 0 1px, #ccc 1px 3px) center / 7px 8px no-repeat, linear-gradient(90deg, #f4f4f4 45%, #d2d2d6 50%, #c6c6ca); }
.avail .hbar .thumb { width: 106px; }
.chosen .hbar .thumb { width: 104px; }
.between { display: block; height: 21px; padding: 5px 2px; }
.stack { display: grid; gap: 6px; }
.sort { display: grid; gap: 12px; align-content: start; }

.pair { display: flex; gap: 7px; }
.avail { width: 216px; }
.chosen { width: 200px; }
.movers { display: flex; flex-direction: column; justify-content: center; gap: 7px; padding-bottom: 19px; }
.movers button { display: grid; place-items: center; width: 20px; height: 20px; border: 1px solid #7ea3cf; box-shadow: inset 0 0 0 1px #5c6f8f; background: linear-gradient(#fff 50%, #cfe0f7 51%, #e8f0fc); }
.movers .arr { margin: 0; background: #33487c; }
.movers .arr.l, .movers .arr.r { width: 6px; height: 10px; }
.movers .arr.u, .movers .arr.d { width: 9px; height: 5px; }
.group.wide { width: 453px; }
.filter { display: flex; padding: 8px 6px 6px 5px; }
.f1 { width: 225px; }
.f2 { width: 56px; }
.f3 { flex: 1; }
.opts h3 { padding-left: 6px; }
.opts .gbody { display: flex; align-items: center; padding: 6px 8px 8px; }
.opts label { display: flex; align-items: center; gap: 4px; margin-right: 25px; }
.opts .fmt { margin: 6px 6px 0 0; }
.opts .combo { width: 126px; }
.buttons { display: flex; gap: 13px; padding: 13px 0 0 263px; }
```
